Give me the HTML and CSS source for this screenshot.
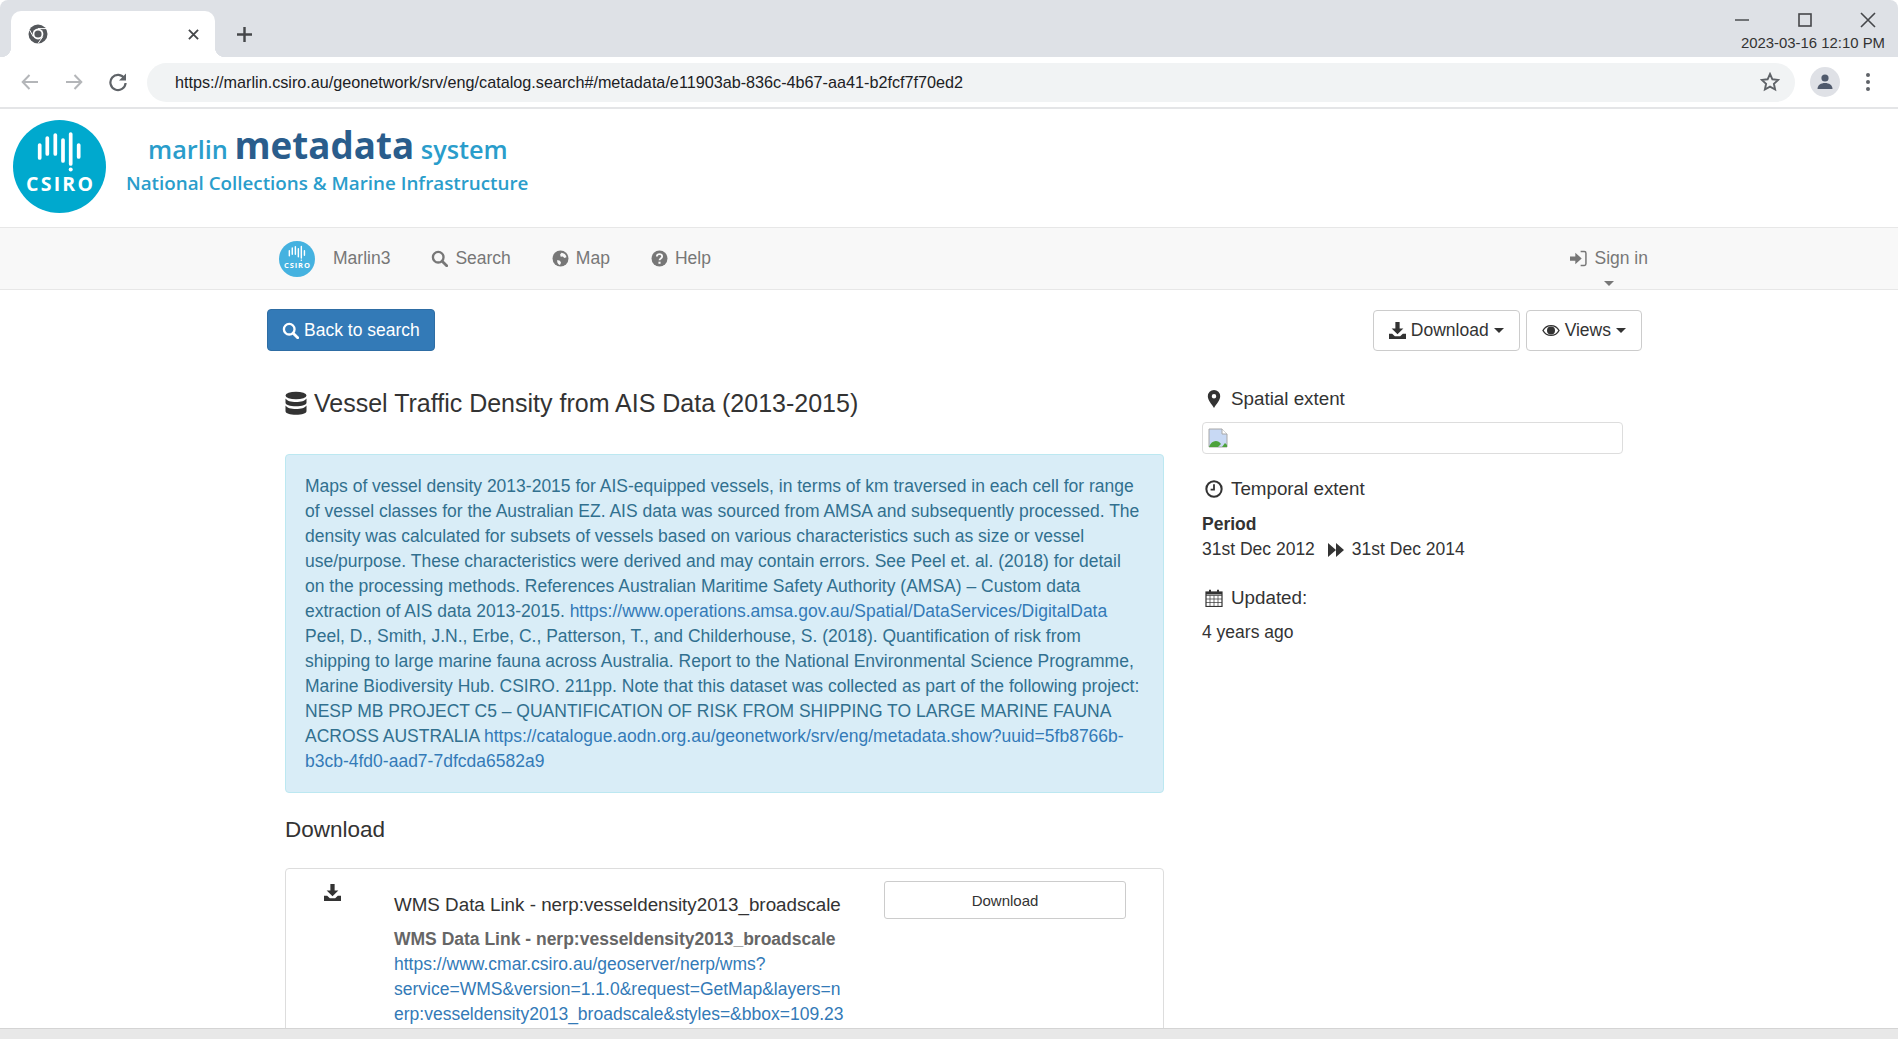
FILE: index.html
```html
<!DOCTYPE html>
<html lang="en">
<head>
  <meta charset="UTF-8">
  <meta name="viewport" content="width=device-width, initial-scale=1.0">
  <title>Vessel Traffic Density from AIS Data (2013-2015)</title>
  <link rel="stylesheet" href="styles.css">
</head>
<body>
  <div class="browser">
    <div class="tabstrip">
      <div class="tab">
        <svg class="tab-logo" viewBox="0 0 20 20"><circle cx="10" cy="10" r="9.5" fill="#55585c"/><circle cx="10" cy="10" r="5.4" fill="#fff"/><circle cx="10" cy="10" r="3.6" fill="#55585c"/><path d="M10 4.600h8.400M5.300 12.700 1.600 6M14.700 12.700 10 19.500" stroke="#fff" stroke-width="1" fill="none"/></svg>
        <svg class="tab-close" viewBox="0 0 12 12"><path d="M1 1l10 10M11 1 1 11" stroke="#45474a" stroke-width="2"/></svg>
      </div>
      <svg class="tab-new" viewBox="0 0 16 16"><path d="M8 0v16M0 8h16" stroke="#45474a" stroke-width="2.600"/></svg>
      <div class="window-side">
        <div class="window-btns">
          <svg viewBox="0 0 16 16"><path d="M1 8h14" stroke="#55575a" stroke-width="1.600"/></svg>
          <svg viewBox="0 0 16 16"><rect x="2" y="2" width="12" height="12" fill="none" stroke="#45474a" stroke-width="1.600"/></svg>
          <svg viewBox="0 0 16 16"><path d="M1 1l14 14M15 1 1 15" stroke="#45474a" stroke-width="1.600"/></svg>
        </div>
        <div class="clock">2023-03-16 12:10 PM</div>
      </div>
    </div>
    <div class="toolbar">
      <svg class="tool" viewBox="0 0 20 20"><path d="M18 10H3M9.500 3 2.700 10l6.800 7" fill="none" stroke="#b4b6b9" stroke-width="2"/></svg>
      <svg class="tool" viewBox="0 0 20 20"><path d="M2 10h15M10.500 3l6.800 7-6.800 7" fill="none" stroke="#b4b6b9" stroke-width="2"/></svg>
      <svg class="tool" viewBox="0 0 20 20"><path d="M16.500 6.500A7.600 7.600 0 1 0 17.600 11" fill="none" stroke="#5f6368" stroke-width="2.200"/><path d="M18 1.500v7h-7z" fill="#5f6368"/></svg>
      <div class="omnibox">
        <span class="url">https://marlin.csiro.au/geonetwork/srv/eng/catalog.search#/metadata/e11903ab-836c-4b67-aa41-b2fcf7f70ed2</span>
        <svg class="star" viewBox="0 0 20 20"><path d="M10 2l2.400 5.300 5.800.6-4.300 3.900 1.200 5.700-5.100-2.900-5.100 2.900 1.200-5.700L1.800 7.900l5.800-.6z" fill="none" stroke="#5f6368" stroke-width="1.900"/></svg>
      </div>
      <div class="avatar">
        <svg viewBox="0 0 20 20"><circle cx="10" cy="6" r="3.600" fill="#505a6c"/><path d="M2.500 17c0-4 3.500-6 7.500-6s7.500 2 7.500 6z" fill="#505a6c"/></svg>
      </div>
      <div class="kebab"><i></i><i></i><i></i></div>
    </div>
  </div>

  <header class="site-header">
    <svg class="csiro-logo" viewBox="0 0 93 93">
      <circle cx="46.500" cy="46.500" r="46.500" fill="#00a9ce"/>
      <path d="M26.700 25v13M34.300 18v16M42.300 15v19M50 20v21M57.700 14v30M65.700 25v12" stroke="#fff" stroke-width="3.700" stroke-linecap="round" fill="none"/>
      <circle cx="57.700" cy="49.500" r="2" fill="#fff"/>
      <text x="13" y="71" textLength="67" class="logo-word">CSIRO</text>
    </svg>
    <div class="site-title">
      <div class="title-top"><span class="t-light">marlin</span> <span class="t-big">metadata</span> <span class="t-light">system</span></div>
      <div class="title-sub">National Collections &amp; Marine Infrastructure</div>
    </div>
  </header>

  <nav class="navbar">
    <div class="nav-left">
      <svg class="nav-logo" viewBox="0 0 93 93">
        <circle cx="46.500" cy="46.500" r="46.500" fill="#45b2e0"/>
        <path d="M26.700 25v13M34.300 18v16M42.300 15v19M50 20v21M57.700 14v30M65.700 25v12" stroke="#fff" stroke-width="3.700" stroke-linecap="round" fill="none"/>
        <circle cx="57.700" cy="49.500" r="2" fill="#fff"/>
        <text x="13" y="71" textLength="67" class="logo-word">CSIRO</text>
      </svg>
      <a class="nav-brand">Marlin3</a>
      <a class="nav-link">
        <svg class="ico" viewBox="0 0 16 16"><circle cx="6.800" cy="6.800" r="5" fill="none" stroke="currentColor" stroke-width="2.200"/><path d="M10.500 10.500l4.300 4.300" stroke="currentColor" stroke-width="2.600" stroke-linecap="round"/></svg>
        Search
      </a>
      <a class="nav-link">
        <svg class="ico" viewBox="0 0 16 16"><circle cx="8" cy="8" r="7.500" fill="currentColor"/><path d="M9 2.500c2.500.3 4.300 2 4.600 4.300l-2 .8-1.400-1.600-2 .3-.6-2zM5 9.500l2.500.5 1 2-1 2.200C5.500 13.500 4.500 11.500 5 9.500z" fill="#f8f8f8"/></svg>
        Map
      </a>
      <a class="nav-link">
        <svg class="ico" viewBox="0 0 16 16"><circle cx="8" cy="8" r="7.500" fill="currentColor"/><path d="M5.500 6.200c0-3 5-3 5 0 0 1.800-2.500 1.800-2.500 3.500" fill="none" stroke="#f8f8f8" stroke-width="1.700"/><rect x="7" y="11" width="2" height="2" fill="#f8f8f8"/></svg>
        Help
      </a>
    </div>
    <div class="nav-right">
      <a class="nav-link sign-in">
        <svg class="ico" viewBox="0 0 16 16"><path d="M0 6h5V2.500L11 8l-6 5.500V10H0z" fill="currentColor"/><path d="M10 1.500h3.500a1.500 1.500 0 0 1 1.500 1.500v10a1.500 1.500 0 0 1-1.500 1.500H10" fill="none" stroke="currentColor" stroke-width="1.400"/></svg>
        Sign in
      </a>
      <span class="nav-caret"></span>
    </div>
  </nav>

  <main class="page">
    <div class="actions">
      <a class="btn btn-primary">
        <svg class="ico" viewBox="0 0 16 16"><circle cx="6.800" cy="6.800" r="5" fill="none" stroke="currentColor" stroke-width="2.200"/><path d="M10.500 10.500l4.300 4.300" stroke="currentColor" stroke-width="2.600" stroke-linecap="round"/></svg>
        Back to search
      </a>
      <div class="actions-right">
        <a class="btn btn-default">
          <svg class="ico" viewBox="0 0 16 16"><path d="M6 0h4v6h3.500L8 11.500 2.500 6H6z" fill="currentColor"/><path d="M0 11h3l2.500 2.500h5L13 11h3v5H0z" fill="currentColor"/></svg>
          Download <span class="caret"></span>
        </a>
        <a class="btn btn-default">
          <svg class="ico ico-wide" viewBox="0 0 18 14"><path d="M1 7c3.500-6.500 12.500-6.500 16 0-3.500 6.500-12.500 6.500-16 0z" fill="none" stroke="currentColor" stroke-width="1.400"/><circle cx="9" cy="7" r="4" fill="currentColor"/></svg>
          Views <span class="caret"></span>
        </a>
      </div>
    </div>

    <div class="columns">
      <section class="col-main">
        <h1 class="record-title">
          <svg class="db-ico" viewBox="0 0 22 24"><ellipse cx="11" cy="4" rx="10.500" ry="3.800" fill="#333"/><path d="M.5 7c1.500 2.500 5.500 3.500 10.500 3.500S20 9.500 21.500 7v4c0 2.500-4.500 3.800-10.500 3.800S.5 13.500.5 11z" fill="#333"/><path d="M.5 14c1.500 2.500 5.500 3.500 10.500 3.500s9-1 10.500-3.500v5.500c0 2.500-4.500 3.800-10.500 3.800S.5 22 .5 19.500z" fill="#333"/></svg>
          Vessel Traffic Density from AIS Data (2013-2015)
        </h1>

        <div class="alert">
          Maps of vessel density 2013-2015 for AIS-equipped vessels, in terms of km traversed in each cell for range of vessel classes for the Australian EZ. AIS data was sourced from AMSA and subsequently processed. The density was calculated for subsets of vessels based on various characteristics such as size or vessel use/purpose. These characteristics were derived and may contain errors. See Peel et. al. (2018) for detail on the processing methods. References Australian Maritime Safety Authority (AMSA) – Custom data extraction of AIS data 2013-2015. <a>https://www.operations.amsa.gov.au/Spatial/DataServices/DigitalData</a> Peel, D., Smith, J.N., Erbe, C., Patterson, T., and Childerhouse, S. (2018). Quantification of risk from shipping to large marine fauna across Australia. Report to the National Environmental Science Programme, Marine Biodiversity Hub. CSIRO. 211pp. Note that this dataset was collected as part of the following project: NESP MB PROJECT C5 – QUANTIFICATION OF RISK FROM SHIPPING TO LARGE MARINE FAUNA ACROSS AUSTRALIA <a>https://catalogue.aodn.org.au/geonetwork/srv/eng/metadata.show?uuid=5fb8766b-b3cb-4fd0-aad7-7dfcda6582a9</a>
        </div>

        <h2 class="section-title">Download</h2>

        <div class="panel">
          <svg class="panel-ico" viewBox="0 0 16 16"><path d="M6 0h4v6h3.500L8 11.500 2.500 6H6z" fill="#333"/><path d="M0 11h3l2.500 2.500h5L13 11h3v5H0z" fill="#333"/></svg>
          <div class="panel-body">
            <h3 class="link-title">WMS Data Link - nerp:vesseldensity2013_broadscale</h3>
            <p class="link-name">WMS Data Link - nerp:vesseldensity2013_broadscale</p>
            <a class="link-url">https://www.cmar.csiro.au/geoserver/nerp/wms?<br>service=WMS&amp;version=1.1.0&amp;request=GetMap&amp;layers=n<br>erp:vesseldensity2013_broadscale&amp;styles=&amp;bbox=109.23</a>
          </div>
          <a class="btn-download">Download</a>
        </div>
      </section>

      <aside class="col-side">
        <h4 class="side-head">
          <span class="side-ico"><svg viewBox="0 0 12 16"><path fill-rule="evenodd" d="M6 0a5.500 5.500 0 0 1 5.500 5.500C11.500 9 8 12.500 6 16 4 12.500.5 9 .5 5.500A5.500 5.500 0 0 1 6 0zm0 3.500a2 2 0 1 0 0 4 2 2 0 0 0 0-4z" fill="#333"/></svg></span>
          Spatial extent
        </h4>
        <div class="thumb">
          <svg class="broken" viewBox="0 0 20 20"><path d="M1 1h13l5 5v13H1z" fill="#c8d9f4" stroke="#a8a8a8"/><path d="M1 19c2-7 9-8 12-3l-3 3z" fill="#4da23c"/><path d="M14 19l3-4 2 2v2z" fill="#4da23c"/><path d="M14 1v5h5" fill="#fff" stroke="#a8a8a8"/></svg>
        </div>
        <h4 class="side-head side-temporal">
          <span class="side-ico"><svg viewBox="0 0 16 16"><circle cx="8" cy="8" r="6.800" fill="none" stroke="#333" stroke-width="1.800"/><path d="M8 3.800V8.500H5" fill="none" stroke="#333" stroke-width="1.600"/></svg></span>
          Temporal extent
        </h4>
        <div class="period-label">Period</div>
        <div class="period">
          <span>31st Dec 2012</span>
          <svg class="fwd" viewBox="0 0 16 14"><path d="M0 0l8 7-8 7zM8 0l8 7-8 7z" fill="#333"/></svg>
          <span>31st Dec 2014</span>
        </div>
        <h4 class="side-head side-updated">
          <span class="side-ico"><svg viewBox="0 0 18 18"><rect x="1" y="3" width="16" height="14.500" fill="#fff" stroke="#333" stroke-width="1.200"/><path d="M1 6.500h16M1 10h16M1 13.500h16M5 6.500v11M9 6.500v11M13 6.500v11" stroke="#333" stroke-width=".7"/><path d="M1 3h16v2.500H1z" fill="#333"/><path d="M5 .8v4M13 .8v4" stroke="#333" stroke-width="2"/></svg></span>
          Updated:
        </h4>
        <div class="updated">4 years ago</div>
      </aside>
    </div>
  </main>

  <div class="hscroll"></div>
</body>
</html>
```

FILE: styles.css
```css
html, body {
  margin: 0;
  padding: 0;
  height: 100%;
  overflow: hidden;
}

body {
  display: flex;
  flex-direction: column;
  font-family: "Liberation Sans", Arial, sans-serif;
  font-size: 17.500px;
  line-height: 25px;
  color: #333;
  background: #fff;
}

svg {
  display: block;
}

/* browser chrome */
.tabstrip {
  height: 57px;
  background: #dee1e6;
  display: flex;
  align-items: flex-end;
  padding-left: 11px;
  border-radius: 8px 8px 0 0;
}

.tab {
  width: 204px;
  height: 46px;
  background: #fff;
  border-radius: 10px 10px 0 0;
  display: flex;
  align-items: center;
  justify-content: space-between;
  padding: 0 16px 0 17px;
  box-sizing: border-box;
  position: relative;
}

.tab::before,
.tab::after {
  content: "";
  position: absolute;
  bottom: 0;
  width: 10px;
  height: 10px;
}

.tab::before {
  left: -10px;
  background: radial-gradient(circle at 0 0, #dee1e6 10px, #fff 10.500px);
}

.tab::after {
  right: -10px;
  background: radial-gradient(circle at 100% 0, #dee1e6 10px, #fff 10.500px);
}

.tab-logo {
  width: 20px;
  height: 20px;
}

.tab-close {
  width: 11px;
  height: 11px;
}

.tab-new {
  width: 15px;
  height: 15px;
  margin: 0 0 15px 22px;
}

.window-side {
  margin-left: auto;
  padding-right: 13px;
  align-self: flex-start;
}

.window-btns {
  display: flex;
  justify-content: flex-end;
  gap: 47px;
  padding: 12px 9px 0 0;
}

.window-btns svg {
  width: 16px;
  height: 16px;
}

.clock {
  font-size: 14.900px;
  line-height: 16px;
  margin-top: 7px;
  color: #333;
  text-align: right;
}

.toolbar {
  height: 50px;
  background: #fff;
  border-bottom: 2px solid #e4e5e7;
  display: flex;
  align-items: center;
  padding: 0 28px 0 20px;
}

.tool {
  width: 20px;
  height: 20px;
  margin-right: 24px;
}

.omnibox {
  flex: 1;
  height: 39px;
  margin-left: -5px;
  background: #f1f3f4;
  border-radius: 20px;
  display: flex;
  align-items: center;
  justify-content: space-between;
  padding: 0 15px 0 28px;
}

.url {
  font-size: 16.200px;
  color: #202124;
}

.star {
  width: 20px;
  height: 20px;
}

.avatar {
  width: 30px;
  height: 30px;
  border-radius: 50%;
  background: #dfe1e6;
  margin-left: 15px;
  display: flex;
  align-items: center;
  justify-content: center;
}

.avatar svg {
  width: 20px;
  height: 20px;
}

.kebab {
  margin-left: 26px;
  width: 4px;
  display: flex;
  flex-direction: column;
  gap: 3px;
}

.kebab i {
  display: block;
  width: 4px;
  height: 4px;
  border-radius: 50%;
  background: #5f6368;
}

/* site header */
.site-header {
  height: 118px;
  display: flex;
  align-items: center;
  padding-left: 13px;
  background: #fff;
}

.csiro-logo {
  width: 93px;
  height: 93px;
  margin-top: -3px;
}

.logo-word {
  font-family: "Open Sans", sans-serif;
  font-size: 19.500px;
  font-weight: 700;
  fill: #fff;
}

.site-title {
  margin-left: 20px;
  font-family: "Open Sans", sans-serif;
  font-weight: 600;
  color: #2a9dcb;
  margin-top: -18px;
}

.title-top {
  padding-left: 22px;
  line-height: 44px;
  font-size: 25.300px;
}

.t-big {
  font-size: 36.800px;
  font-weight: 700;
  color: #2a5d8c;
}

.title-sub {
  font-size: 18.800px;
  line-height: 24px;
}

/* navbar */
.navbar {
  height: 61px;
  background: #f8f8f8;
  border-top: 1px solid #e7e7e7;
  border-bottom: 1px solid #e7e7e7;
  display: flex;
  justify-content: space-between;
  align-items: center;
  padding: 0 250px 0 279px;
  color: #777;
}

.nav-left {
  display: flex;
  align-items: center;
}

.nav-logo {
  width: 36px;
  height: 36px;
}

.nav-brand {
  margin-left: 18px;
}

.nav-link {
  display: flex;
  align-items: center;
  gap: 7px;
  margin-left: 41px;
}

.ico {
  width: 17px;
  height: 17px;
  flex: none;
}

.nav-right {
  position: relative;
}

.sign-in {
  margin-left: 0;
}

.nav-caret {
  position: absolute;
  left: 50%;
  top: 35px;
  border-top: 5px solid #777;
  border-left: 5px solid transparent;
  border-right: 5px solid transparent;
  margin-left: -5px;
}

/* page */
.page {
  flex: 1;
  min-height: 0;
  overflow: hidden;
  padding: 19px 256px 0 267px;
}

.actions {
  display: flex;
  justify-content: space-between;
  align-items: center;
}

.actions-right {
  display: flex;
  gap: 6px;
}

.btn {
  display: inline-flex;
  align-items: center;
  gap: 5px;
  height: 41px;
  box-sizing: border-box;
  border: 1px solid #ccc;
  border-radius: 4px;
  padding: 0 15px;
  color: #333;
}

.btn-primary {
  height: 42px;
  padding: 0 14px;
  background: #337ab7;
  border-color: #2e6da4;
  color: #fff;
}

.caret {
  display: inline-block;
  border-top: 5px solid #333;
  border-left: 5px solid transparent;
  border-right: 5px solid transparent;
}

.ico-wide {
  width: 18px;
}

.columns {
  display: flex;
  padding-left: 18px;
}

.col-main {
  width: 879px;
}

.record-title {
  display: flex;
  align-items: center;
  gap: 7px;
  font-size: 25px;
  font-weight: 400;
  line-height: 30px;
  margin: 37px 0 0;
}

.db-ico {
  width: 22px;
  height: 25px;
}

.alert {
  margin-top: 36px;
  padding: 19px 19px 18px 19px;
  background: #d9edf7;
  border: 1px solid #bce8f1;
  border-radius: 4px;
  color: #31708f;
  overflow-wrap: anywhere;
}

.alert a {
  color: #337ab7;
}

.section-title {
  font-size: 22.500px;
  font-weight: 400;
  line-height: 30px;
  margin: 22px 0 0;
}

.panel {
  margin-top: 23px;
  border: 1px solid #ddd;
  border-radius: 4px;
  display: flex;
  align-items: flex-start;
  padding: 12px 37px 0 38px;
  height: 300px;
}

.panel-ico {
  width: 17px;
  height: 17px;
  flex: none;
  margin-top: 3px;
}

.panel-body {
  width: 456px;
  margin-left: 53px;
  flex: none;
}

.link-title {
  font-size: 18.800px;
  font-weight: 400;
  line-height: 25px;
  margin: 11px 0 10px;
}

.link-name {
  font-weight: 700;
  color: #666;
  margin: 0;
}

.link-url {
  color: #337ab7;
}

.btn-download {
  margin-left: auto;
  width: 242px;
  height: 38px;
  box-sizing: border-box;
  border: 1px solid #ccc;
  border-radius: 3px;
  display: flex;
  align-items: center;
  justify-content: center;
  font-size: 15px;
}

.col-side {
  width: 421px;
  margin-left: 38px;
  padding-top: 35px;
}

.side-head {
  display: flex;
  align-items: center;
  font-weight: 400;
  font-size: 18.800px;
  line-height: 25px;
  margin: 0;
}

.side-ico {
  width: 24px;
  margin-right: 5px;
  display: flex;
  justify-content: center;
  flex: none;
}

.side-ico svg {
  width: 18px;
  height: 18px;
}

.thumb {
  height: 32px;
  margin-top: 11px;
  box-sizing: border-box;
  border: 1px solid #ddd;
  border-radius: 4px;
  padding: 5px;
}

.broken {
  width: 20px;
  height: 20px;
}

.side-temporal {
  margin-top: 22px;
}

.period-label {
  font-weight: 700;
  margin-top: 11px;
}

.period {
  display: flex;
  align-items: center;
}

.fwd {
  width: 16px;
  height: 14px;
  margin: 0 8px 0 13px;
}

.side-updated {
  margin-top: 23px;
}

.updated {
  margin-top: 10px;
}

.hscroll {
  height: 11px;
  background: #e8e8e8;
  border-top: 1px solid #d4d4d4;
  box-sizing: border-box;
  position: fixed;
  left: 0;
  right: 0;
  bottom: 0;
}
```
